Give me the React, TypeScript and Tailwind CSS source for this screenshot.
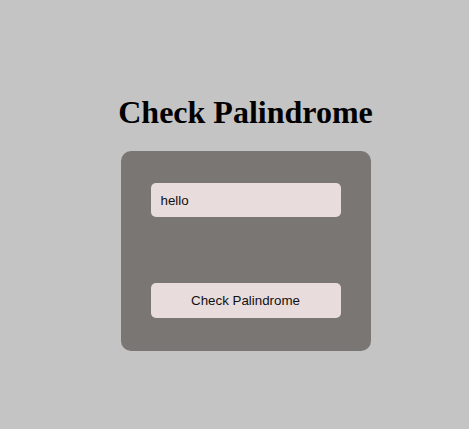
import React, { useState } from 'react';

const App: React.FC = () => {
  const [text, setText] = useState('hello');

  return (
    <div className="min-h-screen w-full bg-[#c4c4c4] flex flex-col items-center pt-[94px] pl-[22px]">
      <h1 className="font-['Liberation_Serif',serif] font-bold text-[32px] leading-[37px] text-black">
        Check Palindrome
      </h1>

      <div className="mt-[20px] w-[250px] h-[200px] bg-[#7a7674] rounded-[10px] pt-[32px] px-[30px] pb-[33px] flex flex-col">
        <input
          type="text"
          value={text}
          onChange={(e) => setText(e.target.value)}
          className="w-full h-[34px] bg-[#e8dcdc] rounded-[5px] px-[10px] text-[13.333px] text-[#111] font-['Liberation_Sans',Arial,sans-serif] outline-none"
        />
        <button className="mt-[66px] w-full h-[35px] bg-[#e8dcdc] rounded-[5px] text-[13.333px] text-[#111] font-['Liberation_Sans',Arial,sans-serif]">
          Check Palindrome
        </button>
      </div>
    </div>
  );
};

export default App;
